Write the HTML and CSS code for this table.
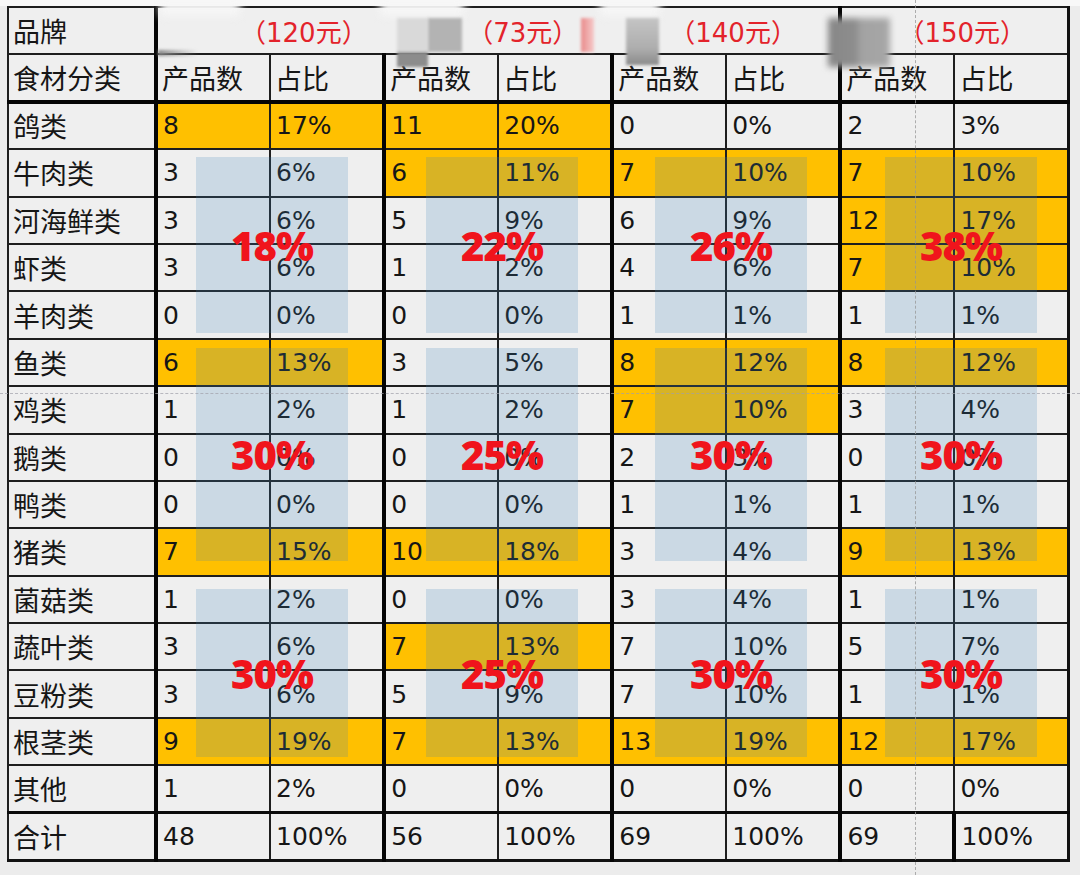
FILE: index.html
```html
<!DOCTYPE html>
<html lang="zh">
<head>
<meta charset="utf-8">
<title>食材分类</title>
<link rel="stylesheet" href="styles.css">
</head>
<body>
<div class="sheet">
  <table class="grid">
    <colgroup>
      <col class="c-cat">
      <col><col><col><col><col><col><col><col>
    </colgroup>
    <tr class="r-brand">
      <th class="zh">品牌</th>
      <th colspan="2" class="g brand p1"><span class="price"><span class="fw">（</span>120元<span class="fw">）</span></span></th>
      <th colspan="2" class="g brand p2"><span class="price"><span class="fw">（</span>73元<span class="fw">）</span></span></th>
      <th colspan="2" class="g brand p3"><span class="price"><span class="fw">（</span>140元<span class="fw">）</span></span></th>
      <th colspan="2" class="g brand p4"><span class="price"><span class="fw">（</span>150元<span class="fw">）</span></span></th>
    </tr>
    <tr class="r-head">
      <th class="zh">食材分类</th>
      <th class="g zh">产品数</th><th class="zh">占比</th>
      <th class="g zh">产品数</th><th class="zh">占比</th>
      <th class="g zh">产品数</th><th class="zh">占比</th>
      <th class="g zh">产品数</th><th class="zh">占比</th>
    </tr>
    <tr><th class="zh">鸽类</th>
      <td class="g y">8</td><td class="y">17%</td>
      <td class="g y">11</td><td class="y">20%</td>
      <td class="g">0</td><td>0%</td>
      <td class="g">2</td><td>3%</td></tr>
    <tr><th class="zh">牛肉类</th>
      <td class="g">3</td><td>6%</td>
      <td class="g y">6</td><td class="y">11%</td>
      <td class="g y">7</td><td class="y">10%</td>
      <td class="g y">7</td><td class="y">10%</td></tr>
    <tr><th class="zh">河海鲜类</th>
      <td class="g">3</td><td>6%</td>
      <td class="g">5</td><td>9%</td>
      <td class="g">6</td><td>9%</td>
      <td class="g y">12</td><td class="y">17%</td></tr>
    <tr><th class="zh">虾类</th>
      <td class="g">3</td><td>6%</td>
      <td class="g">1</td><td>2%</td>
      <td class="g">4</td><td>6%</td>
      <td class="g y">7</td><td class="y">10%</td></tr>
    <tr><th class="zh">羊肉类</th>
      <td class="g">0</td><td>0%</td>
      <td class="g">0</td><td>0%</td>
      <td class="g">1</td><td>1%</td>
      <td class="g">1</td><td>1%</td></tr>
    <tr><th class="zh">鱼类</th>
      <td class="g y">6</td><td class="y">13%</td>
      <td class="g">3</td><td>5%</td>
      <td class="g y">8</td><td class="y">12%</td>
      <td class="g y">8</td><td class="y">12%</td></tr>
    <tr><th class="zh">鸡类</th>
      <td class="g">1</td><td>2%</td>
      <td class="g">1</td><td>2%</td>
      <td class="g y">7</td><td class="y">10%</td>
      <td class="g">3</td><td>4%</td></tr>
    <tr><th class="zh">鹅类</th>
      <td class="g">0</td><td>0%</td>
      <td class="g">0</td><td>0%</td>
      <td class="g">2</td><td>3%</td>
      <td class="g">0</td><td>0%</td></tr>
    <tr><th class="zh">鸭类</th>
      <td class="g">0</td><td>0%</td>
      <td class="g">0</td><td>0%</td>
      <td class="g">1</td><td>1%</td>
      <td class="g">1</td><td>1%</td></tr>
    <tr><th class="zh">猪类</th>
      <td class="g y">7</td><td class="y">15%</td>
      <td class="g y">10</td><td class="y">18%</td>
      <td class="g">3</td><td>4%</td>
      <td class="g y">9</td><td class="y">13%</td></tr>
    <tr><th class="zh">菌菇类</th>
      <td class="g">1</td><td>2%</td>
      <td class="g">0</td><td>0%</td>
      <td class="g">3</td><td>4%</td>
      <td class="g">1</td><td>1%</td></tr>
    <tr><th class="zh">蔬叶类</th>
      <td class="g">3</td><td>6%</td>
      <td class="g y">7</td><td class="y">13%</td>
      <td class="g">7</td><td>10%</td>
      <td class="g">5</td><td>7%</td></tr>
    <tr><th class="zh">豆粉类</th>
      <td class="g">3</td><td>6%</td>
      <td class="g">5</td><td>9%</td>
      <td class="g">7</td><td>10%</td>
      <td class="g">1</td><td>1%</td></tr>
    <tr><th class="zh">根茎类</th>
      <td class="g y">9</td><td class="y">19%</td>
      <td class="g y">7</td><td class="y">13%</td>
      <td class="g y">13</td><td class="y">19%</td>
      <td class="g y">12</td><td class="y">17%</td></tr>
    <tr><th class="zh">其他</th>
      <td class="g">1</td><td>2%</td>
      <td class="g">0</td><td>0%</td>
      <td class="g">0</td><td>0%</td>
      <td class="g">0</td><td>0%</td></tr>
    <tr class="r-total"><th class="zh">合计</th>
      <td class="g">48</td><td>100%</td>
      <td class="g">56</td><td>100%</td>
      <td class="g">69</td><td>100%</td>
      <td class="g">69</td><td class="thick-l">100%</td></tr>
  </table>

  <div class="hl x1 b1"><span class="pct">18%</span></div>
  <div class="hl x1 b2"><span class="pct">30%</span></div>
  <div class="hl x1 b3"><span class="pct">30%</span></div>
  <div class="hl x2 b1"><span class="pct">22%</span></div>
  <div class="hl x2 b2"><span class="pct">25%</span></div>
  <div class="hl x2 b3"><span class="pct">25%</span></div>
  <div class="hl x3 b1"><span class="pct">26%</span></div>
  <div class="hl x3 b2"><span class="pct">30%</span></div>
  <div class="hl x3 b3"><span class="pct">30%</span></div>
  <div class="hl x4 b1"><span class="pct">38%</span></div>
  <div class="hl x4 b2"><span class="pct">30%</span></div>
  <div class="hl x4 b3"><span class="pct">30%</span></div>

  <div class="guide vguide"></div>
  <div class="guide hguide"></div>

  <div class="blot glare g1"></div>
  <div class="blot glare g2"></div>
  <div class="blot glare g3"></div>
  <div class="blot m0"></div>
  <div class="blot m1"></div>
  <div class="blot m2"></div>
  <div class="blot m3"></div>
  <div class="blot m4"></div>
  <div class="blot m5"></div>
  <div class="blot m6"></div>
</div>
</body>
</html>
```
FILE: styles.css
```css
html, body {
  margin: 0;
  padding: 0;
}

body {
  width: 1080px;
  height: 875px;
  overflow: hidden;
  background: #ececec;
  font-family: "DejaVu Sans", "Noto Sans CJK SC", sans-serif;
}

.sheet {
  position: relative;
  width: 1080px;
  height: 875px;
  box-sizing: border-box;
  padding: 6px 0 0 7px;
  background: linear-gradient(#f8f8f8 0, #f8f8f8 6px, #ececec 6px);
}

.grid {
  border-collapse: collapse;
  table-layout: fixed;
  width: 1063px;
  background: #efefef;
  border-left: 2px solid #1a1a1a;
  border-top: 2px solid #1a1a1a;
  border-right: 3px solid #111;
  border-bottom: 3px solid #111;
}

.c-cat {
  width: 148px;
}

.grid tr {
  height: 47.4px;
}

.grid th,
.grid td {
  border: 2px solid #1e1e1e;
  padding: 0 0 0 5px;
  text-align: left;
  vertical-align: middle;
  font-weight: normal;
  font-size: 25px;
  color: #161616;
  white-space: nowrap;
  overflow: hidden;
}

.grid .zh {
  font-family: "Noto Sans CJK SC", sans-serif;
  font-size: 27px;
  padding-left: 4px;
}

.grid .g {
  border-left: 4px solid #050505;
}

.grid .thick-l {
  border-left: 4px solid #050505;
}

.grid .y {
  background: #ffc000;
}

.r-head th {
  border-bottom: 4px solid #050505;
}

.r-total th,
.r-total td {
  border-top: 3px solid #0a0a0a;
}

.r-brand .brand {
  padding-left: 0;
}

/* photo glare washes out the brand-row dividers between the first groups */
.grid .r-brand .p1,
.grid .r-brand .p2 {
  border-right-style: hidden;
}

.grid .r-brand .p2,
.grid .r-brand .p3 {
  border-left-style: hidden;
}

.price {
  color: #e3232b;
  font-family: "DejaVu Sans", "Noto Sans CJK SC", sans-serif;
  font-size: 26px;
}

.price .fw {
  font-family: "Noto Sans CJK SC", sans-serif;
  font-size: 26px;
}

.p1 { padding-left: 82px !important; }
.p2 { padding-left: 83px !important; }
.p3 { padding-left: 57px !important; }
.p4 { padding-left: 56px !important; }

/* translucent highlight blocks with the red share labels */
.hl {
  position: absolute;
  width: 152px;
  background: rgba(60, 128, 185, 0.2);
  display: flex;
  align-items: center;
  justify-content: center;
}

.x1 { left: 196px; }
.x2 { left: 426px; }
.x3 { left: 655px; }
.x4 { left: 885px; }

.b1 { top: 157px; height: 176px; }
.b2 { top: 348px; height: 213px; }
.b3 { top: 589px; height: 168px; }

.pct {
  font-family: "Open Sans", "DejaVu Sans", sans-serif;
  font-weight: 800;
  font-size: 40px;
  line-height: 1;
  color: #f0141c;
  letter-spacing: -1px;
  margin-top: 1px;
}

/* slide guide lines */
.guide {
  position: absolute;
}

.vguide {
  left: 915px;
  top: 0;
  height: 875px;
  border-left: 1px dashed rgba(150, 150, 150, 0.75);
}

.hguide {
  left: 0;
  top: 393px;
  width: 1080px;
  border-top: 1px dashed rgba(160, 160, 170, 0.7);
}

/* obscuring blots and photo glare */
.blot {
  position: absolute;
  filter: blur(1.5px);
}

.glare {
  background: #f6f6f6;
  filter: blur(4px);
}

.g1 { left: 160px; top: 0; width: 80px; height: 16px; }
.g2 { left: 380px; top: 0; width: 84px; height: 16px; }
.g3 { left: 600px; top: 0; width: 60px; height: 16px; }

.m0 {
  left: 158px;
  top: 50px;
  width: 40px;
  height: 6px;
  background: linear-gradient(to right, #8a8a8a, rgba(140, 140, 140, 0));
}

.m1 {
  left: 397px;
  top: 18px;
  width: 31px;
  height: 34px;
  background: #d9d9d9;
}

.m2 {
  left: 428px;
  top: 18px;
  width: 34px;
  height: 34px;
  background: #b3b3b3;
}

.m3 {
  left: 397px;
  top: 52px;
  width: 31px;
  height: 15px;
  background: #8c8c8c;
}

.m4 {
  left: 581px;
  top: 18px;
  width: 13px;
  height: 34px;
  background: linear-gradient(to right, #e98a8a, #f5caca);
}

.m5 {
  left: 626px;
  top: 18px;
  width: 33px;
  height: 47px;
  background: linear-gradient(#c4c4c4, #adadad 65%, #8a8a8a);
}

.m6 {
  left: 828px;
  top: 18px;
  width: 62px;
  height: 49px;
  background: linear-gradient(to right, #878787, #8e8e8e 48%, #a3a3a3 50%, #a6a6a6);
  filter: blur(3px);
}
```
